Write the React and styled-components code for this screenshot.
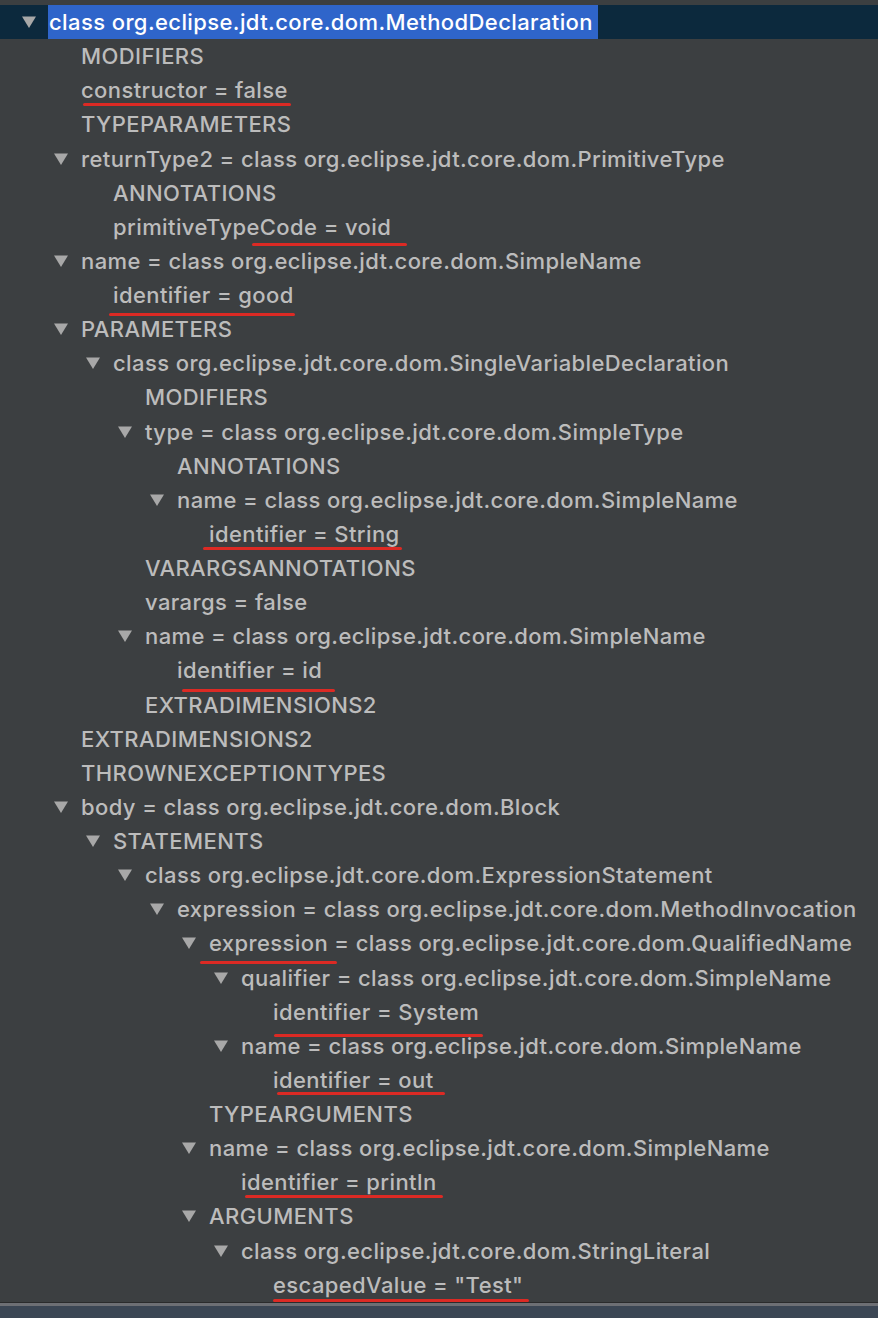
import styled, { createGlobalStyle } from 'styled-components'

const GlobalStyle = createGlobalStyle`
  html, body {
    margin: 0;
    padding: 0;
    background: #3c3f41;
    overflow: hidden;
  }
`

const Panel = styled.div`
  width: 878px;
  height: 1318px;
  display: flex;
  flex-direction: column;
  background: #3c3f41;
  font-family: Inter, 'Liberation Sans', sans-serif;
  font-size: 22px;
  font-weight: 500;
  letter-spacing: 0.4px;
  color: #bcbcbc;
`

const Tree = styled.div`
  flex: 1;
  padding-top: 5px;
  overflow: hidden;
`

const Row = styled.div`
  height: 34.14px;
  display: flex;
  align-items: stretch;
  padding-left: ${p => 16 + p.$level * 32}px;
  background: ${p => (p.$selected ? '#0c293d' : 'transparent')};
`

const Toggle = styled.div`
  width: 32px;
  flex: none;
  display: flex;
  align-items: center;
  padding-left: 6px;
  box-sizing: border-box;
`

const Label = styled.div`
  position: relative;
  display: flex;
  align-items: center;
  white-space: nowrap;
  padding: 0 5px 0 1px;
  background: ${p => (p.$selected ? '#2f65ca' : 'transparent')};
  color: ${p => (p.$selected ? '#ffffff' : '#bcbcbc')};
`

const Mark = styled.span`
  position: absolute;
  height: 3px;
  border-radius: 2px;
  background: #dc2a24;
`

const Footer = styled.div`
  height: 16px;
  flex: none;
  border-top: 1px solid #2a2b2c;
  box-sizing: border-box;
  background: #3b4654;
  box-shadow: inset 0 3px 0 #6d6f74;
`

function Arrow () {
  return (
    <svg width='14' height='12' viewBox='0 0 14 12'>
      <path d='M0 0.5 L14 0.5 L7 12 Z' fill='#a8a8a8' />
    </svg>
  )
}

// [level, text, expandable, mark: [left, width, top], selected]
const rows = [
  [0, 'class org.eclipse.jdt.core.dom.MethodDeclaration', true, null, true],
  [1, 'MODIFIERS'],
  [1, 'constructor = false', false, [2, 208, 30]],
  [1, 'TYPEPARAMETERS'],
  [1, 'returnType2 = class org.eclipse.jdt.core.dom.PrimitiveType', true],
  [2, 'ANNOTATIONS'],
  [2, 'primitiveTypeCode = void', false, [139, 155, 33]],
  [1, 'name = class org.eclipse.jdt.core.dom.SimpleName', true],
  [2, 'identifier = good', false, [-4, 186, 35]],
  [1, 'PARAMETERS', true],
  [2, 'class org.eclipse.jdt.core.dom.SingleVariableDeclaration', true],
  [3, 'MODIFIERS'],
  [3, 'type = class org.eclipse.jdt.core.dom.SimpleType', true],
  [4, 'ANNOTATIONS'],
  [4, 'name = class org.eclipse.jdt.core.dom.SimpleName', true],
  [5, 'identifier = String', false, [-6, 199, 30]],
  [3, 'VARARGSANNOTATIONS'],
  [3, 'varargs = false'],
  [3, 'name = class org.eclipse.jdt.core.dom.SimpleName', true],
  [4, 'identifier = id', false, [5, 153, 36]],
  [3, 'EXTRADIMENSIONS2'],
  [1, 'EXTRADIMENSIONS2'],
  [1, 'THROWNEXCEPTIONTYPES'],
  [1, 'body = class org.eclipse.jdt.core.dom.Block', true],
  [2, 'STATEMENTS', true],
  [3, 'class org.eclipse.jdt.core.dom.ExpressionStatement', true],
  [4, 'expression = class org.eclipse.jdt.core.dom.MethodInvocation', true],
  [5, 'expression = class org.eclipse.jdt.core.dom.QualifiedName', true, [-9, 137, 35]],
  [6, 'qualifier = class org.eclipse.jdt.core.dom.SimpleName', true],
  [7, 'identifier = System', false, [1, 209, 39]],
  [6, 'name = class org.eclipse.jdt.core.dom.SimpleName', true],
  [7, 'identifier = out', false, [4, 168, 29]],
  [5, 'TYPEARGUMENTS'],
  [5, 'name = class org.eclipse.jdt.core.dom.SimpleName', true],
  [6, 'identifier = println', false, [4, 198, 30]],
  [5, 'ARGUMENTS', true],
  [6, 'class org.eclipse.jdt.core.dom.StringLiteral', true],
  [7, 'escapedValue = "Test"', false, [0, 256, 31]]
]

export default function App () {
  return (
    <>
      <GlobalStyle />
      <Panel>
        <Tree>
          {rows.map(([level, text, open, mark, selected], i) => (
            <Row key={i} $level={level} $selected={selected}>
              <Toggle>{open && <Arrow />}</Toggle>
              <Label $selected={selected}>
                {text}
                {mark && (
                  <Mark
                    style={{ left: mark[0] + 1, width: mark[1], top: mark[2] }}
                  />
                )}
              </Label>
            </Row>
          ))}
        </Tree>
        <Footer />
      </Panel>
    </>
  )
}
